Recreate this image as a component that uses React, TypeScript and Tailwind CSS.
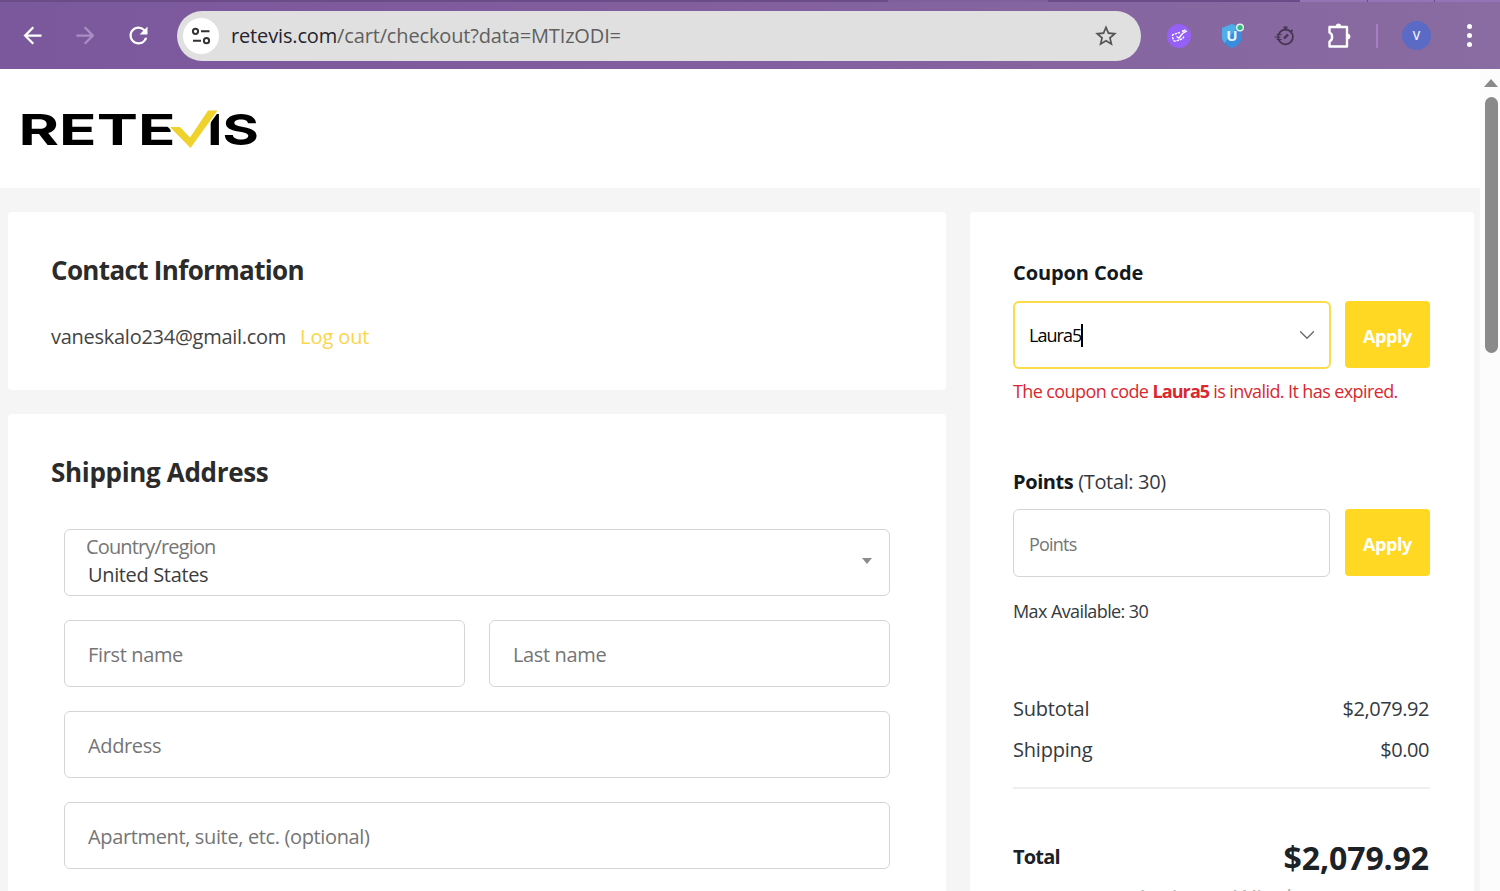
import { ChevronDown } from "lucide-react";
import { MdArrowBack, MdArrowForward, MdRefresh, MdStarBorder } from "react-icons/md";

function BrowserBar() {
  return (
    <div className="flex h-[69px] flex-col bg-gradient-to-r from-[#7b579c] via-[#835f9f] to-[#896ca1]">
      <div className="flex h-[2px] shrink-0">
        <div className="w-[888px] bg-[#6b4b88]" />
        <div className="w-[160px] bg-[#80609c]" />
        <div className="w-[252px] bg-[#6b4b88]" />
        <div className="flex flex-1 gap-px bg-[#6b4b88]">
          <div className="w-[67px] bg-[#9474b4]" />
          <div className="w-[66px] bg-[#9474b4]" />
          <div className="flex-1 bg-[#9474b4]" />
        </div>
      </div>
      <div className="flex h-[67px] items-center">
        <MdArrowBack className="ml-[19px] shrink-0 text-white" size={27} />
        <MdArrowForward className="ml-[26px] shrink-0 text-[#ab8fc4]" size={27} />
        <MdRefresh className="ml-[26px] shrink-0 text-white" size={27} />
        <div className="ml-[25px] flex h-[50px] w-[964px] items-center rounded-full bg-[#e0e0e0]">
          <div className="ml-[6px] flex h-[36px] w-[36px] items-center justify-center rounded-full bg-white">
            <svg width="20" height="18" viewBox="0 0 20 18" fill="none" stroke="#333" strokeWidth="2">
              <circle cx="4.5" cy="4.3" r="2.6" />
              <path d="M10 4.300h8.500M2 13.700h8" />
              <circle cx="15.5" cy="13.7" r="2.6" />
            </svg>
          </div>
          <span className="ml-[12px] text-[20px] tracking-[-0.15px] text-[#5f5f5f]">
            <span className="text-[#24242c]">retevis.com</span>/cart/checkout?data=MTIzODI=
          </span>
          <MdStarBorder className="ml-auto mr-[22px] text-[#555]" size={26} />
        </div>
        <div className="ml-[26px] flex h-[24px] w-[24px] items-center justify-center rounded-full bg-[#9560f5]">
          <svg width="20" height="20" viewBox="0 0 20 20" fill="none" stroke="#fff" strokeWidth="1.4">
            <path d="M11 6.500L4.500 8.500Q3 9 3.500 11l1 3q.5 1.500 2.500 1l6-2q2-1 1.500-3" strokeDasharray="2.400 .8" />
            <path d="M7.500 10.500l2.500 1.500 3.500-4.500 4.500-2.500M13 5.500l3.500-1.500" />
          </svg>
        </div>
        <svg className="ml-[30px]" width="24" height="26" viewBox="0 0 24 26">
          <path d="M11 1l10 4v8c0 6-4 10-10 12C5 23 1 19 1 13V5z" fill="#3a8cdc" />
          <path d="M11 1L1 5v8c0 3 1 5 2.500 7L17 3.500z" fill="#4fadea" />
          <text x="11" y="18" textAnchor="middle" className="text-[15px] font-bold" fill="#e8f5ff">U</text>
          <circle cx="19" cy="4.5" r="4" fill="#e4f2ee" />
          <circle cx="19" cy="4.5" r="2.6" fill="#35b981" />
        </svg>
        <svg className="ml-[28px]" width="24" height="24" viewBox="0 0 24 24" fill="none" stroke="#453550" strokeWidth="1.8">
          <circle cx="12.5" cy="13" r="7.4" />
          <path d="M10.500 3.500h4M12.500 3.500v2.500M18 6l1.500 1.500" />
          <path d="M11 14.500l4-4" strokeWidth="2.4" />
          <path d="M3.500 10.500h5M1.500 13h6M3.500 15.500h5" strokeWidth="1.2" />
        </svg>
        <svg className="ml-[28px]" width="28" height="28" viewBox="0 0 28 28" fill="none" stroke="#fff" strokeWidth="2.4" strokeLinejoin="round">
          <path d="M4.500 5h17.500v19.500H4.500v-5c3.500-1.500 3.500-7.500 0-9z" />
          <path d="M11 4.500a2.500 2.500 0 0 1 5 0zM22.500 12a2.500 2.500 0 0 1 0 5z" fill="#fff" strokeWidth="1" />
        </svg>
        <div className="ml-[23px] h-[24px] w-[2px] bg-[#a57fc4]" />
        <div className="ml-[24px] flex h-[29px] w-[29px] items-center justify-center rounded-full bg-[#5b6bc5] text-[12px] font-semibold text-[#eef0ff]">V</div>
        <div className="ml-[36px] flex flex-col gap-[4px]">
          <div className="h-[5px] w-[5px] rounded-full bg-white" />
          <div className="h-[5px] w-[5px] rounded-full bg-white" />
          <div className="h-[5px] w-[5px] rounded-full bg-white" />
        </div>
      </div>
    </div>
  );
}

function Logo() {
  return (
    <svg className="ml-[10px]" width="260" height="70" viewBox="0 0 260 70" fontFamily="Inter, sans-serif" fontSize="43" fontWeight="700">
      <text x="8.5" y="50.5" textLength="157" lengthAdjust="spacingAndGlyphs">RETE</text>
      <text x="197" y="50.5" textLength="52" lengthAdjust="spacingAndGlyphs">IS</text>
      <path d="M160 33h10l10 10.500 18-27h9.500L180.500 54z" fill="#efd22c" stroke="#fff" strokeWidth="3" paintOrder="stroke" />
    </svg>
  );
}

function Field({ label }: { label: string }) {
  return (
    <div className="flex h-[67px] flex-1 items-center rounded-md border border-[#d5d5d5] px-[23px] pt-[2px] text-[20px] tracking-[-0.36px] text-[#757575]">
      {label}
    </div>
  );
}

function ApplyButton() {
  return (
    <button className="h-[67px] w-[85px] rounded bg-[#ffd824] pt-[3px] text-[18px] font-bold tracking-[-0.4px] text-white">Apply</button>
  );
}

function Scrollbar() {
  return (
    <div className="flex w-[20px] flex-col items-center bg-[#fcfcfc] pl-[2px] pt-[10px]">
      <svg width="14" height="8" viewBox="0 0 14 8">
        <path d="M7 0l7 8H0z" fill="#8a8a8a" />
      </svg>
      <div className="mt-[10px] h-[256px] w-[13px] rounded-full bg-[#8a8a8a]" />
    </div>
  );
}

export default function App() {
  return (
    <div className="h-[891px] w-[1500px] overflow-hidden bg-white font-['Open_Sans',sans-serif]">
      <BrowserBar />
      <div className="flex h-[822px]">
        <div className="w-[1480px] bg-[#f5f5f5]">
          <header className="flex h-[119px] items-center bg-white">
            <Logo />
          </header>
          <main className="flex gap-[24px] pl-[8px] pt-[24px]">
            <div className="flex w-[938px] flex-col gap-[24px]">
              <section className="h-[178px] rounded bg-white px-[43px] pt-[38px]">
                <h2 className="text-[26px] font-bold leading-[40px] tracking-[-0.66px] text-[#2b2b2b]">Contact Information</h2>
                <p className="mt-[32px] flex gap-[14px] text-[20px] leading-[30px] tracking-[-0.27px] text-[#444]">
                  <span>vaneskalo234@gmail.com</span>
                  <a className="tracking-[-0.1px] text-[#fbd54a]">Log out</a>
                </p>
              </section>
              <section className="h-[520px] rounded bg-white px-[43px] pt-[38px]">
                <h2 className="text-[26px] font-bold leading-[40px] tracking-[-0.32px] text-[#2b2b2b]">Shipping Address</h2>
                <div className="mx-[13px] mt-[37px] flex flex-col gap-[24px]">
                  <div className="flex h-[67px] items-center justify-between rounded-md border border-[#d5d5d5] pb-[3px] pl-[21px] pr-[17px]">
                    <div className="flex flex-col text-[20px] leading-[28px]">
                      <span className="tracking-[-0.85px] text-[#757575]">Country/region</span>
                      <span className="pl-[2px] tracking-[-0.35px] text-[#3c3c3c]">United States</span>
                    </div>
                    <svg width="10" height="6" viewBox="0 0 10 6">
                      <path d="M0 0h10L5 6z" fill="#8c8c8c" />
                    </svg>
                  </div>
                  <div className="flex gap-[24px]">
                    <Field label="First name" />
                    <Field label="Last name" />
                  </div>
                  <div className="flex">
                    <Field label="Address" />
                  </div>
                  <div className="flex">
                    <Field label="Apartment, suite, etc. (optional)" />
                  </div>
                </div>
              </section>
            </div>
            <aside className="h-[720px] w-[504px] rounded bg-white pl-[43px] pr-[44px] pt-[46px] text-[#333a40]">
              <h3 className="text-[20px] font-bold leading-[30px] tracking-[-0.1px] text-[#14191d]">Coupon Code</h3>
              <div className="mt-[13px] flex justify-between">
                <div className="flex h-[68px] w-[318px] items-center justify-between rounded-md border-2 border-[#fbdc4b] pl-[14px] pr-[9px]">
                  <div className="flex items-center">
                    <span className="text-[18px] tracking-[-0.95px] text-black">Laura5</span>
                    <span className="h-[23px] w-[2px] bg-black" />
                  </div>
                  <ChevronDown className="text-[#666]" size={26} strokeWidth={1.2} />
                </div>
                <ApplyButton />
              </div>
              <p className="mt-[7px] whitespace-nowrap text-[18px] leading-[30px] tracking-[-0.6px] text-[#d9282f]">
                The coupon code <b className="tracking-[-0.9px]">Laura5</b> is invalid. It has expired.
              </p>
              <p className="mt-[61px] text-[20px] leading-[30px] tracking-[-0.36px]">
                <b className="tracking-[-0.4px] text-[#14191d]">Points</b> (Total: 30)
              </p>
              <div className="mt-[12px] flex justify-between">
                <div className="flex h-[68px] w-[317px] items-center rounded-md border border-[#d5d5d5] pl-[15px] pt-[2px] text-[18px] tracking-[-0.8px] text-[#757575]">Points</div>
                <ApplyButton />
              </div>
              <p className="mt-[19px] text-[18px] leading-[30px] tracking-[-0.6px]">Max Available: 30</p>
              <div className="mt-[62px] flex flex-col border-b-2 border-[#efefef] pb-[17px] text-[20px] leading-[41px] tracking-[-0.2px]">
                <div className="flex justify-between">
                  <span>Subtotal</span>
                  <span className="pr-px tracking-[-0.45px]">$2,079.92</span>
                </div>
                <div className="flex justify-between">
                  <span>Shipping</span>
                  <span className="pr-px tracking-[-0.45px]">$0.00</span>
                </div>
              </div>
              <div className="mt-[48px] flex items-center justify-between font-bold leading-[42px] text-[#1c2226]">
                <span className="pb-[2px] text-[20px] leading-[40px] tracking-[-0.8px]">Total</span>
                <span className="pr-px text-[32px] tracking-[-0.1px]">$2,079.92</span>
              </div>
              <p className="ml-[122px] whitespace-nowrap text-[24px] leading-[38px] tracking-[0.4px] text-[#b5b5b5]">Activate Windows</p>
            </aside>
          </main>
        </div>
        <Scrollbar />
      </div>
    </div>
  );
}
